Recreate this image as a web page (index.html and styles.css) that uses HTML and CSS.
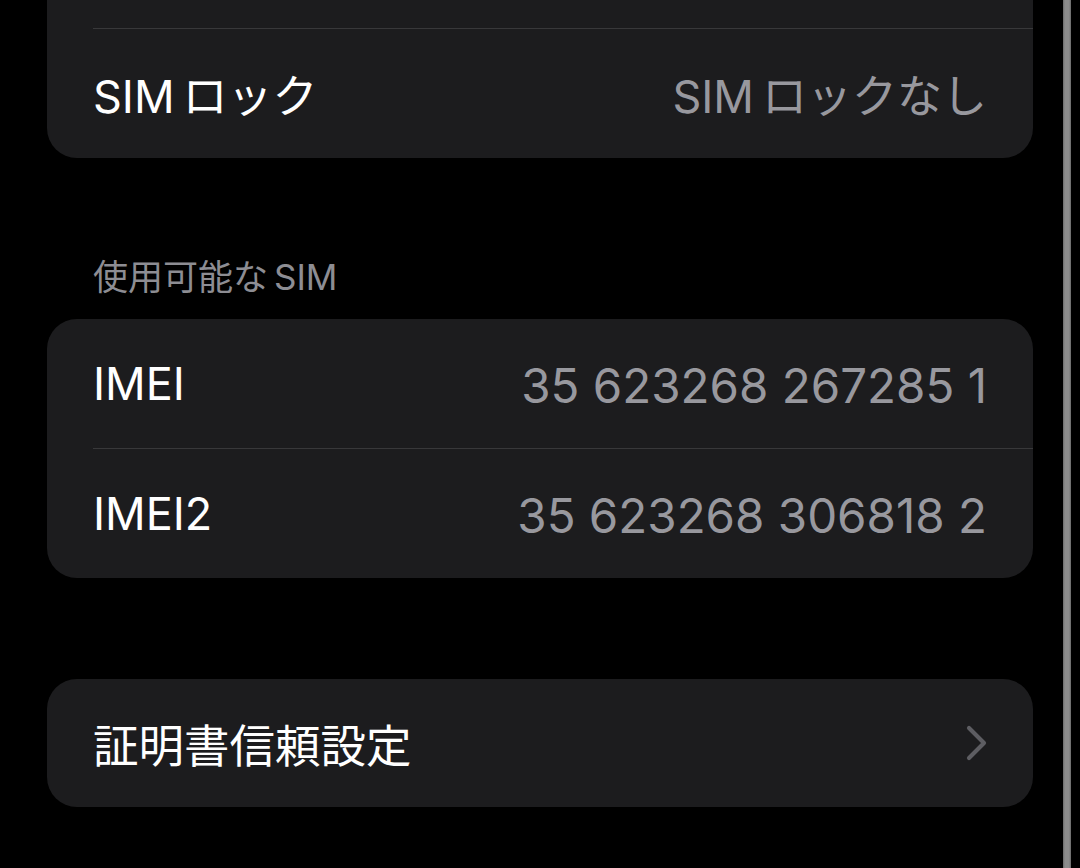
FILE: index.html
```html
<!DOCTYPE html>
<html lang="ja">
<head>
<meta charset="utf-8">
<link rel="stylesheet" href="styles.css">
</head>
<body>
<div class="page">
  <div class="card card-top">
    <div class="row"></div>
    <div class="sep"></div>
    <div class="row">
      <span class="label"><span class="spaced">SIM</span>ロック</span>
      <span class="value"><span class="spaced">SIM</span>ロックなし</span>
    </div>
  </div>

  <div class="section-header"><span class="spaced">使用可能な</span>SIM</div>
  <div class="card">
    <div class="row">
      <span class="label">IMEI</span>
      <span class="value num">35 623268 267285 1</span>
    </div>
    <div class="sep"></div>
    <div class="row">
      <span class="label">IMEI2</span>
      <span class="value num">35 623268 306818 2</span>
    </div>
  </div>

  <div class="card card-gap">
    <div class="row">
      <span class="label cjk">証明書信頼設定</span>
      <svg class="chevron" width="24" height="40" viewBox="0 0 24 40">
        <polyline points="4,5 19,20 4,35" fill="none" stroke="#5d5d62" stroke-width="4.2" stroke-linecap="round" stroke-linejoin="round"/>
      </svg>
    </div>
  </div>
</div>
<div class="scrollbar"></div>
</body>
</html>
```

FILE: styles.css
```css
html, body {
  margin: 0;
  padding: 0;
  background: #000;
  height: 100%;
  overflow: hidden;
}

body {
  font-family: "Inter", "Noto Sans CJK JP", sans-serif;
  color: #fff;
  position: relative;
}

.page {
  padding: 0 47px;
  margin-top: -101px;
}

.card {
  background: #1c1c1e;
  border-radius: 30px;
  overflow: hidden;
}

.card-gap {
  margin-top: 101px;
}

.row {
  height: 129px;
  display: flex;
  align-items: center;
  justify-content: space-between;
  padding: 0 46px;
}

.card-gap .row {
  height: 128px;
}

.sep {
  height: 1px;
  background: #38383a;
  margin-left: 46px;
}

.label {
  font-size: 45px;
  color: #fff;
}

.label.cjk {
  font-size: 45.5px;
}

.value {
  font-size: 45px;
  color: #98989e;
}

.value.num {
  font-size: 47.5px;
  padding-top: 3px;
}

.spaced {
  margin-right: 8px;
}

.chevron {
  display: block;
  margin-right: -2px;
}

.section-header {
  font-size: 35px;
  line-height: 40px;
  color: #8d8d93;
  padding-left: 46px;
  margin-top: 99px;
  margin-bottom: 22px;
}

.section-header .spaced {
  margin-right: 6px;
}

.scrollbar {
  position: absolute;
  top: 0;
  left: 1063px;
  width: 8px;
  height: 100%;
  background: linear-gradient(to right, #6a6a6a, #8c8c8c 25%, #8c8c8c 75%, #6a6a6a);
}
```
